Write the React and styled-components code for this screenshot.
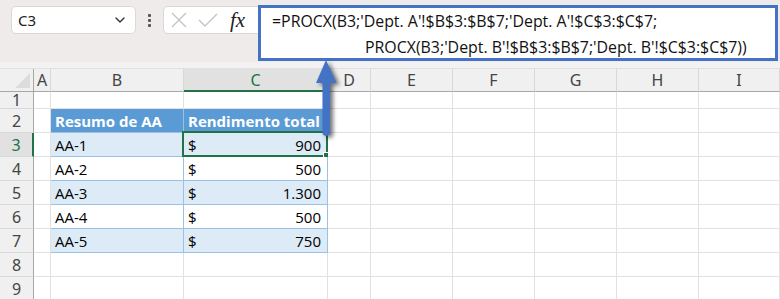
import React from "react";
import styled, { createGlobalStyle } from "styled-components";
import { FiChevronDown } from "react-icons/fi";

const Global = createGlobalStyle`
  body {
    margin: 0;
    background: #ffffff;
    font-family: "Open Sans", "Noto Sans", sans-serif;
  }
`;

const Page = styled.div`
  position: relative;
  width: 780px;
  height: 299px;
  overflow: hidden;
  background: #ffffff;
`;

const TopBar = styled.div`
  height: 62px;
  background: #efebeb;
  display: flex;
  align-items: flex-start;
  padding: 5px 2px 0 11px;
  box-sizing: border-box;
`;

const Strip = styled.div`
  height: 6px;
  background: #f3f1f1;
  border-bottom: 1px solid #e2e0e0;
`;

const NameBox = styled.div`
  margin-top: 1px;
  width: 125px;
  height: 28px;
  box-sizing: border-box;
  background: #ffffff;
  border: 1px solid #dcd8d8;
  border-radius: 5px;
  display: flex;
  align-items: center;
  justify-content: space-between;
  padding: 0 7px 0 6px;
  font-family: "Noto Sans", sans-serif;
  font-size: 15px;
  color: #222;
  svg {
    font-size: 16px;
    color: #333;
  }
`;

const Dots = styled.div`
  width: 27px;
  height: 30px;
  display: flex;
  flex-direction: column;
  align-items: center;
  justify-content: center;
  gap: 2px;
  span {
    width: 3px;
    height: 3px;
    background: #555;
    border-radius: 1px;
  }
`;

const FxBox = styled.div`
  margin-top: 1px;
  width: 97px;
  height: 28px;
  box-sizing: border-box;
  background: #ffffff;
  border: 1px solid #dcd8d8;
  border-radius: 5px 0 0 5px;
  display: flex;
  align-items: center;
  gap: 9px;
  padding-left: 6px;
`;

const Fx = styled.span`
  font-family: "Liberation Serif", serif;
  font-style: italic;
  font-size: 21px;
  color: #222;
  margin-left: 2px;
`;

const FormulaBox = styled.div`
  flex: 1;
  height: 56px;
  margin-left: -2px;
  box-sizing: border-box;
  background: #ffffff;
  border: 3px solid #4472c4;
  padding: 0 0 0 11px;
  font-family: "Open Sans", sans-serif;
  font-size: 15.9px;
  line-height: 26px;
  color: #111;
  white-space: pre;
`;

const Line = styled.div`
  padding-left: ${(p) => p.$indent || 0}px;
`;

const Grid = styled.div`
  display: grid;
  grid-template-columns: 34px 17px 133px 144px 43px 82px 82px 82px 82px 81px;
  grid-template-rows: 23px 17px repeat(8, 24px);
`;

const ColHead = styled.div`
  box-sizing: border-box;
  background: ${(p) => (p.$active ? "#e1e1e1" : "#f0f0f0")};
  border-right: 1px solid #d8d8d8;
  border-bottom: ${(p) => (p.$active ? "2px solid #217346" : "1px solid #a8a8a8")};
  color: ${(p) => (p.$active ? "#217346" : "#444")};
  font-family: "Noto Sans", sans-serif;
  font-size: 16px;
  display: flex;
  align-items: center;
  justify-content: center;
`;

const Corner = styled.div`
  position: relative;
  box-sizing: border-box;
  background: #f0f0f0;
  border-right: 1px solid #a8a8a8;
  border-bottom: 1px solid #a8a8a8;
  &::after {
    content: "";
    position: absolute;
    right: 3px;
    bottom: 3px;
    border-left: 15px solid transparent;
    border-bottom: 15px solid #dcdcdc;
  }
`;

const RowHead = styled.div`
  box-sizing: border-box;
  background: ${(p) => (p.$active ? "#e1e1e1" : "#f0f0f0")};
  border-right: ${(p) => (p.$active ? "2px solid #217346" : "1px solid #a8a8a8")};
  border-bottom: 1px solid #d8d8d8;
  color: ${(p) => (p.$active ? "#217346" : "#444")};
  font-family: "Noto Sans", sans-serif;
  font-size: 16px;
  display: flex;
  align-items: center;
  justify-content: center;
`;

const Cell = styled.div`
  position: relative;
  box-sizing: border-box;
  border-right: 1px solid ${(p) => (p.$table ? "#9bc2e6" : "#e1e1e1")};
  border-bottom: 1px solid ${(p) => (p.$table ? "#9bc2e6" : "#e1e1e1")};
  background: ${(p) => p.$bg || "#ffffff"};
  color: ${(p) => (p.$head ? "#ffffff" : "#000000")};
  font-weight: ${(p) => (p.$head ? 700 : 400)};
  font-family: "Open Sans", sans-serif;
  font-size: 15px;
  display: flex;
  align-items: center;
  justify-content: space-between;
  padding: 0 6px 0 4px;
  white-space: nowrap;
`;

const Selected = styled.div`
  position: absolute;
  left: -2px;
  top: -2px;
  right: -1px;
  bottom: -1px;
  border: 2px solid #217346;
  pointer-events: none;
  &::after {
    content: "";
    position: absolute;
    right: -4px;
    bottom: -4px;
    width: 5px;
    height: 5px;
    background: #217346;
    border: 1px solid #ffffff;
  }
`;

const Arrow = styled.svg`
  position: absolute;
  left: 312px;
  top: 58px;
  filter: drop-shadow(3px 2px 2px rgba(0, 0, 0, 0.55));
`;

const cols = ["A", "B", "C", "D", "E", "F", "G", "H", "I"];
const data = [
  ["AA-1", "900"],
  ["AA-2", "500"],
  ["AA-3", "1.300"],
  ["AA-4", "500"],
  ["AA-5", "750"],
];

function renderRow(r) {
  const cells = [];
  cells.push(
    <RowHead key="h" $active={r === 3}>
      {r}
    </RowHead>
  );
  for (let c = 0; c < cols.length; c++) {
    const key = cols[c] + r;
    const col = cols[c];
    if (r === 2 && col === "B") {
      cells.push(<Cell key={key} $table $head $bg="#5b9bd5">Resumo de AA</Cell>);
    } else if (r === 2 && col === "C") {
      cells.push(<Cell key={key} $table $head $bg="#5b9bd5">Rendimento total</Cell>);
    } else if (r >= 3 && r <= 7 && (col === "B" || col === "C")) {
      const [name, value] = data[r - 3];
      const bg = r % 2 === 1 ? "#ddebf7" : "#ffffff";
      cells.push(
        <Cell key={key} $table $bg={bg}>
          {col === "B" ? (
            <span>{name}</span>
          ) : (
            <>
              <span>$</span>
              <span>{value}</span>
            </>
          )}
          {r === 3 && col === "C" && <Selected />}
        </Cell>
      );
    } else {
      cells.push(<Cell key={key} />);
    }
  }
  return cells;
}

export default function App() {
  const rows = [];
  for (let r = 1; r <= 9; r++) rows.push(...renderRow(r));
  return (
    <Page>
      <Global />
      <TopBar>
        <NameBox>
          <span>C3</span>
          <FiChevronDown />
        </NameBox>
        <Dots>
          <span />
          <span />
          <span />
        </Dots>
        <FxBox>
          <svg width="18" height="18" viewBox="0 0 18 18">
            <path d="M2 2 L16 16 M16 2 L2 16" stroke="#c4c4c4" strokeWidth="1.4" fill="none" />
          </svg>
          <svg width="22" height="18" viewBox="0 0 22 18">
            <path d="M2 9 L8 15 L20 3" stroke="#c4c4c4" strokeWidth="1.4" fill="none" />
          </svg>
          <Fx>fx</Fx>
        </FxBox>
        <FormulaBox>
          <Line>=PROCX(B3;'Dept. A'!$B$3:$B$7;'Dept. A'!$C$3:$C$7;</Line>
          <Line $indent={93}>PROCX(B3;'Dept. B'!$B$3:$B$7;'Dept. B'!$C$3:$C$7))</Line>
        </FormulaBox>
      </TopBar>
      <Strip />
      <Grid>
        <Corner />
        {cols.map((c) => (
          <ColHead key={c} $active={c === "C"}>
            {c}
          </ColHead>
        ))}
        {rows}
      </Grid>
      <Arrow width="30" height="84" viewBox="0 0 30 84">
        <path
          d="M14 2 L24.5 25 L18 25 L18 76 Q14 80 10.5 76 L10.5 25 L4 25 Z"
          fill="#4472c4"
        />
      </Arrow>
    </Page>
  );
}
